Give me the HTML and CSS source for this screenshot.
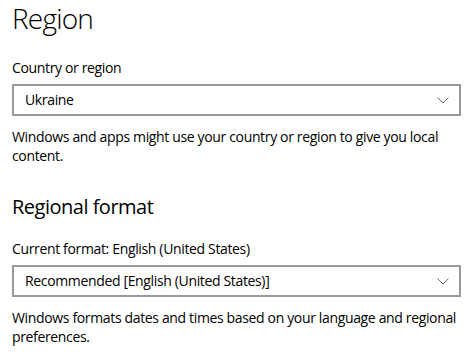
FILE: index.html
```html
<!DOCTYPE html>
<html>
<head>
<meta charset="UTF-8">
<link rel="stylesheet" href="styles.css">
</head>
<body>
 <div class="page">
   <h1 class="title">Region</h1>
   <div class="label">Country or region</div>
   <div class="combo">
     <span class="combo-text">Ukraine</span>
     <svg class="chevron" width="12" height="7" viewBox="0 0 12 7"><path d="M0.5 0.5 L6 6 L11.5 0.5" fill="none" stroke="#6b6b6b" stroke-width="1"/></svg>
   </div>
   <p class="desc">Windows and apps might use your country or region to give you local content.</p>

   <h2 class="subtitle">Regional format</h2>
   <div class="label label-tight">Current format: English (United States)</div>
   <div class="combo">
     <span class="combo-text">Recommended [English (United States)]</span>
     <svg class="chevron" width="12" height="7" viewBox="0 0 12 7"><path d="M0.5 0.5 L6 6 L11.5 0.5" fill="none" stroke="#6b6b6b" stroke-width="1"/></svg>
   </div>
   <p class="desc">Windows formats dates and times based on your language and regional preferences.</p>
 </div>
</body>
</html>
```

FILE: styles.css
```css
body {
  margin: 0;
  background: #fff;
  color: #000;
  font-family: "Open Sans", "Noto Sans", sans-serif;
  letter-spacing: -0.35px;
}

.page {
  width: 449px;
  padding-left: 12px;
}

.title {
  margin: 0;
  font-size: 28px;
  font-weight: 300;
  line-height: 36px;
  letter-spacing: -0.8px;
}

.label {
  margin-top: 22px;
  font-size: 14px;
  line-height: 19px;
}

.label-tight {
  margin-top: 18px;
}

.combo {
  margin-top: 7px;
  height: 32px;
  box-sizing: border-box;
  border: 2px solid #999;
  display: flex;
  align-items: center;
  justify-content: space-between;
  padding: 0 10px 2px 11px;
  font-size: 14px;
}

.chevron {
  display: block;
  margin-top: 2px;
}

.desc {
  margin: 11px 0 0 0;
  font-size: 14px;
  line-height: 19px;
}

.subtitle {
  margin: 28px 0 0 0;
  font-size: 20px;
  font-weight: 400;
  line-height: 28px;
  letter-spacing: -0.5px;
}
```
